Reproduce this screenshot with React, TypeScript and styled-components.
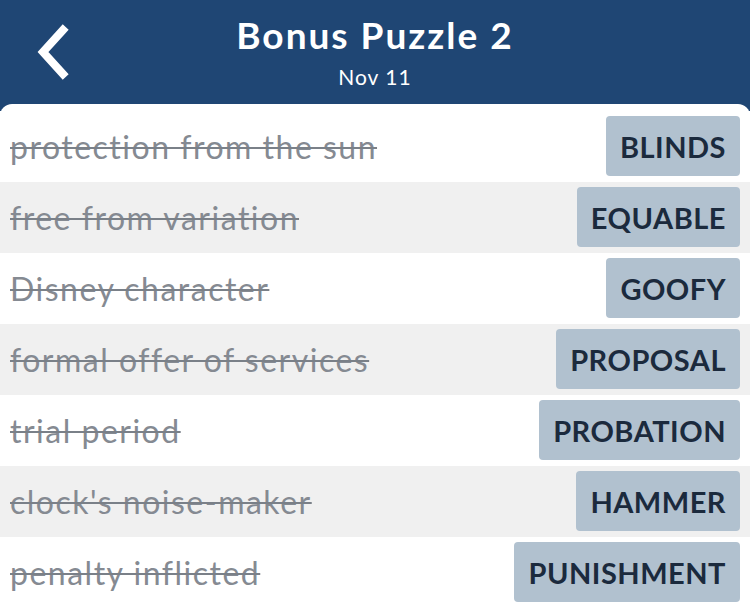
import React from 'react';
import styled, {createGlobalStyle} from 'styled-components';

const GlobalStyle = createGlobalStyle`
    body {
        margin: 0;
        background: #1f4674;
        font-family: Lato, "Noto Sans", sans-serif;
    }
`;

const Header = styled.div`
    position: relative;
    height: 104px;
    display: flex;
    flex-direction: column;
    align-items: center;
    color: #ffffff;
`;

const BackButton = styled.button`
    position: absolute;
    left: 30px;
    top: 24px;
    width: 48px;
    height: 58px;
    padding: 0;
    background: none;
    border: none;
    cursor: pointer;
`;

const Title = styled.div`
    margin-top: 12px;
    font-size: 37px;
    font-weight: 700;
    line-height: 46px;
    letter-spacing: 2px;
`;

const SubTitle = styled.div`
    font-size: 21px;
    line-height: 30px;
    margin-top: 4px;
    letter-spacing: 1px;
`;

const Panel = styled.div`
    background: #ffffff;
    border-radius: 12px 12px 0 0;
    padding-top: 7px;
    min-height: 520px;
`;

const Row = styled.div<{ $shaded: boolean }>`
    display: flex;
    align-items: center;
    justify-content: space-between;
    height: 71px;
    padding: 0 10px;
    background: ${p => p.$shaded ? '#f0f0f0' : '#ffffff'};
`;

const Clue = styled.span`
    font-size: 32px;
    letter-spacing: 1.5px;
    color: #858a92;
    text-decoration: line-through;
    text-decoration-thickness: 2px;
    text-decoration-color: #7a8088;
    white-space: nowrap;
`;

const Answer = styled.span`
    height: 60px;
    display: flex;
    align-items: center;
    padding: 0 14px;
    margin-top: -1px;
    border-radius: 4px;
    background: #b1c1cf;
    color: #1b2a3d;
    font-size: 29px;
    font-weight: 700;
    letter-spacing: 0.5px;
`;

const rows = [
    ['protection from the sun', 'BLINDS'],
    ['free from variation', 'EQUABLE'],
    ['Disney character', 'GOOFY'],
    ['formal offer of services', 'PROPOSAL'],
    ['trial period', 'PROBATION'],
    ["clock's noise-maker", 'HAMMER'],
    ['penalty inflicted', 'PUNISHMENT'],
];

const App = () => {
    return (
        <>
            <GlobalStyle/>
            <Header>
                <BackButton aria-label="back">
                    <svg width="48" height="58" viewBox="0 0 48 58">
                        <polyline points="33,6 13,28 33,50" fill="none" stroke="#ffffff" strokeWidth="8"
                                  strokeLinecap="square" strokeLinejoin="miter"/>
                    </svg>
                </BackButton>
                <Title>Bonus Puzzle 2</Title>
                <SubTitle>Nov 11</SubTitle>
            </Header>
            <Panel>
                {rows.map(([clue, answer], i) => (
                    <Row key={answer} $shaded={i % 2 === 1}>
                        <Clue>{clue}</Clue>
                        <Answer>{answer}</Answer>
                    </Row>
                ))}
            </Panel>
        </>
    );
};

export default App;
